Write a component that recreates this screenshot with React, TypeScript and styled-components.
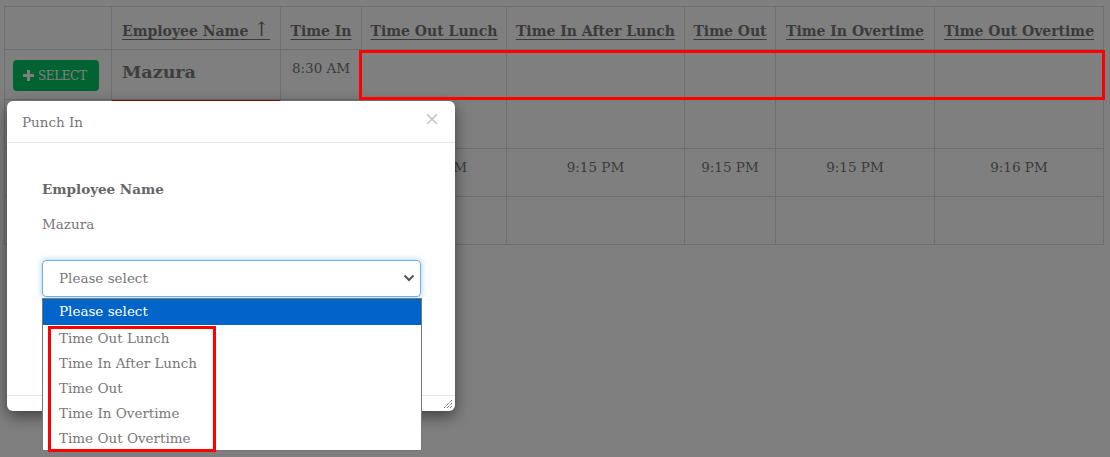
import React from 'react';
import styled, { createGlobalStyle } from 'styled-components';

const GlobalStyle = createGlobalStyle`
  html, body {
    margin: 0;
    padding: 0;
    background: #fff;
  }
  body {
    font-family: "DejaVu Serif", Georgia, serif;
    overflow: hidden;
  }
`;

const Page = styled.div`
  position: relative;
  width: 1110px;
  height: 457px;
  box-sizing: border-box;
  padding: 6px 0 0 4px;
`;

const Table = styled.table`
  border-collapse: collapse;
  table-layout: fixed;
  width: 1099px;
  color: #777;
  font-size: 13.5px;
`;

const HeadRow = styled.tr`
  height: 43px;
`;

const BodyRow = styled.tr<{ $h: number }>`
  height: ${({ $h }) => $h}px;
`;

const Th = styled.th`
  border: 1px solid #ddd;
  padding: 0 6px 8px;
  vertical-align: bottom;
  text-align: center;
  font-size: 14px;
  font-weight: bold;
  white-space: nowrap;
  line-height: 20px;
`;

const SortLink = styled.span`
  text-decoration: underline;
  text-underline-offset: 3px;
`;

const SortArrow = styled.span`
  font-size: 20px;
  font-weight: normal;
  line-height: 14px;
`;

const Td = styled.td<{ $align?: string }>`
  border: 1px solid #ddd;
  padding: 8px 8px 8px;
  vertical-align: top;
  text-align: ${({ $align }) => $align || 'center'};
  line-height: 20px;
  white-space: nowrap;
`;

const RedCell = styled.td`
  border: 1px solid #ddd;
  padding: 0;
  vertical-align: top;
`;

const RedBar = styled.div`
  height: 30px;
  background: #f2361f;
`;

const SelectButton = styled.button`
  display: flex;
  align-items: center;
  gap: 4px;
  height: 31px;
  width: 86px;
  margin-top: 2px;
  padding: 0 0 0 10px;
  border: 0;
  border-radius: 4px;
  background: #00c763;
  color: #fff;
  font-family: "DejaVu Serif", Georgia, serif;
  font-size: 12px;
  letter-spacing: -0.4px;
  cursor: pointer;
`;

const EmployeeName = styled.span`
  display: block;
  margin: 4px 0 0 2px;
  font-size: 17.5px;
  font-weight: bold;
  color: #7c7c7c;
`;

const Backdrop = styled.div`
  position: absolute;
  inset: 0;
  background: rgba(0, 0, 0, 0.5);
`;

const Modal = styled.div`
  position: absolute;
  left: 7px;
  top: 101px;
  width: 448px;
  height: 310px;
  display: flex;
  flex-direction: column;
  background: #fff;
  border-radius: 6px;
  box-shadow: 0 5px 15px rgba(0, 0, 0, 0.5);
  color: #777;
`;

const ModalHeader = styled.div`
  height: 41px;
  display: flex;
  align-items: center;
  justify-content: space-between;
  padding: 0 15px 0 15px;
  border-bottom: 1px solid #e5e5e5;
  font-size: 13.5px;
`;

const Close = styled.span`
  margin-top: -7px;
  font-size: 19px;
  color: #c9c9c9;
  line-height: 1;
`;

const ModalBody = styled.div`
  flex: 1;
  padding: 36px 34px 0 35px;
`;

const Label = styled.div`
  font-weight: bold;
  font-size: 13.5px;
  line-height: 20px;
  color: #666;
`;

const Value = styled.div`
  margin-top: 15px;
  font-size: 13.5px;
  line-height: 20px;
`;

const SelectBox = styled.div`
  margin-top: 26px;
  height: 37px;
  box-sizing: border-box;
  display: flex;
  align-items: center;
  justify-content: space-between;
  padding: 0 5px 1px 16px;
  border: 1px solid #66afe9;
  border-radius: 4px;
  box-shadow: 0 0 6px rgba(102, 175, 233, 0.6);
  font-size: 13.5px;
  color: #777;
`;

const ModalFooter = styled.div`
  height: 12px;
  border-top: 1px solid #e5e5e5;
  display: flex;
  justify-content: flex-end;
  align-items: flex-end;
  padding: 0 3px 3px 0;
`;

const Dropdown = styled.ul`
  position: absolute;
  left: 35px;
  top: 197px;
  width: 380px;
  height: 153px;
  box-sizing: border-box;
  margin: 0;
  padding: 0;
  list-style: none;
  background: #fff;
  border: 1px solid #767676;
  font-size: 13.5px;
`;

const Option = styled.li<{ $active?: boolean }>`
  height: 25px;
  line-height: 26px;
  padding: 0 16px;
  color: ${({ $active }) => ($active ? '#fff' : '#777')};
  background: ${({ $active }) => ($active ? '#0064c8' : 'transparent')};
  &:first-child {
    height: 26px;
    line-height: 25px;
  }
`;

const Highlight = styled.div<{ $x: number; $y: number; $w: number; $h: number; $b: number }>`
  position: absolute;
  left: ${({ $x }) => $x}px;
  top: ${({ $y }) => $y}px;
  width: ${({ $w }) => $w}px;
  height: ${({ $h }) => $h}px;
  box-sizing: border-box;
  border: ${({ $b }) => $b}px solid #ff0000;
  pointer-events: none;
`;

const columns = [107, 169, 81, 145, 178, 91, 159, 169];
const headers = [
  'Time In',
  'Time Out Lunch',
  'Time In After Lunch',
  'Time Out',
  'Time In Overtime',
  'Time Out Overtime',
];
const options = [
  'Time Out Lunch',
  'Time In After Lunch',
  'Time Out',
  'Time In Overtime',
  'Time Out Overtime',
];

const PlusIcon = () => (
  <svg width="11" height="11" viewBox="0 0 11 11">
    <path d="M4 0h3v4h4v3H7v4H4V7H0V4h4z" fill="#fff" />
  </svg>
);

const Chevron = () => (
  <svg width="12" height="8" viewBox="0 0 12 8">
    <polyline points="1.5,1.5 6,6 10.5,1.5" fill="none" stroke="#555" strokeWidth="2" />
  </svg>
);

const ResizeGrip = () => (
  <svg width="8" height="8" viewBox="0 0 8 8">
    <path d="M8 0L0 8M8 3L3 8M8 6L6 8" stroke="#333" strokeWidth="1" strokeDasharray="1 1" />
  </svg>
);

const App = () => {
  return (
    <>
      <GlobalStyle />
      <Page>
        <Table>
          <colgroup>
            {columns.map((w, i) => (
              <col key={i} style={{ width: w }} />
            ))}
          </colgroup>
          <thead>
            <HeadRow>
              <Th />
              <Th>
                <SortLink>
                  Employee Name <SortArrow>↑</SortArrow>
                </SortLink>
              </Th>
              {headers.map((h) => (
                <Th key={h}>
                  <SortLink>{h}</SortLink>
                </Th>
              ))}
            </HeadRow>
          </thead>
          <tbody>
            <BodyRow $h={48}>
              <Td $align="left">
                <SelectButton>
                  <PlusIcon />
                  SELECT
                </SelectButton>
              </Td>
              <Td $align="left">
                <EmployeeName>Mazura</EmployeeName>
              </Td>
              <Td>8:30 AM</Td>
              <Td />
              <Td />
              <Td />
              <Td />
              <Td />
            </BodyRow>
            <BodyRow $h={49}>
              <Td />
              <RedCell>
                <RedBar />
              </RedCell>
              <Td />
              <Td />
              <Td />
              <Td />
              <Td />
              <Td />
            </BodyRow>
            <BodyRow $h={48}>
              <Td />
              <Td />
              <Td>8:00 AM</Td>
              <Td>12:00 PM</Td>
              <Td>9:15 PM</Td>
              <Td>9:15 PM</Td>
              <Td>9:15 PM</Td>
              <Td>9:16 PM</Td>
            </BodyRow>
            <BodyRow $h={48}>
              <Td />
              <Td />
              <Td />
              <Td />
              <Td />
              <Td />
              <Td />
              <Td />
            </BodyRow>
          </tbody>
        </Table>

        <Backdrop />

        <Modal>
          <ModalHeader>
            <span>Punch In</span>
            <Close>×</Close>
          </ModalHeader>
          <ModalBody>
            <Label>Employee Name</Label>
            <Value>Mazura</Value>
            <SelectBox>
              <span>Please select</span>
              <Chevron />
            </SelectBox>
          </ModalBody>
          <ModalFooter>
            <ResizeGrip />
          </ModalFooter>
          <Dropdown>
            <Option $active>Please select</Option>
            {options.map((o) => (
              <Option key={o}>{o}</Option>
            ))}
          </Dropdown>
        </Modal>

        <Highlight $x={359} $y={50} $w={746} $h={50} $b={3} />
        <Highlight $x={48} $y={326} $w={168} $h={126} $b={3} />
      </Page>
    </>
  );
};

export default App;
